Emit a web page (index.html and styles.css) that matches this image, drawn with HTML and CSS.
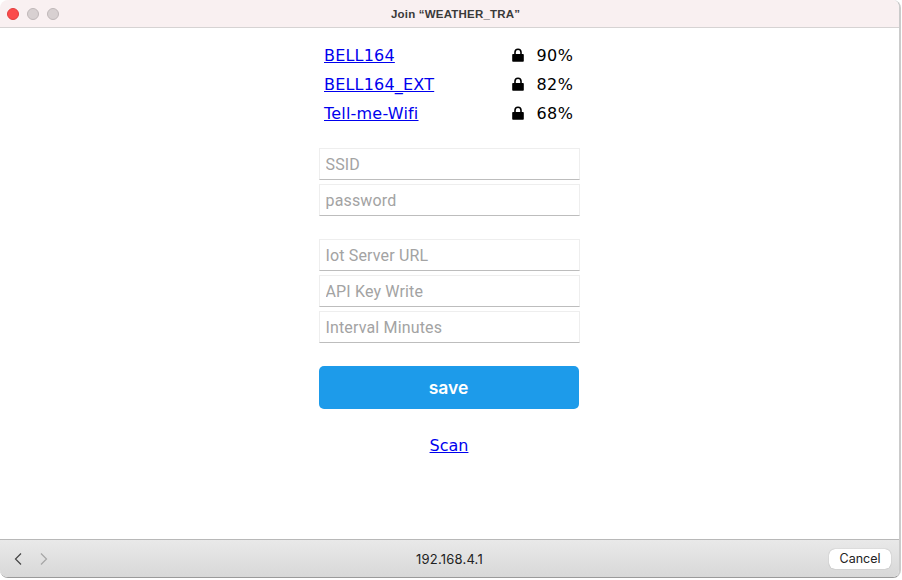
FILE: index.html
```html
<!DOCTYPE html>
<html lang="en">
<head>
<meta charset="utf-8">
<title>Join WEATHER_TRA</title>
<link rel="stylesheet" href="styles.css">
</head>
<body>
<div class="window">
  <header class="titlebar">
    <div class="lights">
      <span class="light light-close"></span>
      <span class="light"></span>
      <span class="light"></span>
    </div>
    <div class="title">Join “WEATHER_TRA”</div>
  </header>
  <main class="content">
    <div class="column">
      <ul class="networks">
        <li class="network"><a href="#">BELL164</a><span class="signal"><svg class="lock" viewBox="0 0 12 14"><path d="M1 6h1.2V4.2a3.800 3.800 0 0 1 7.600 0V6H11a.8.8 0 0 1 .8.8v6.200a.8.8 0 0 1-.8.8H1a.8.8 0 0 1-.8-.8V6.800A.8.8 0 0 1 1 6zM3.800 6h4.400V4.200a2.200 2.200 0 0 0-4.400 0z"/></svg><span class="pct">90%</span></span></li>
        <li class="network"><a href="#">BELL164_EXT</a><span class="signal"><svg class="lock" viewBox="0 0 12 14"><path d="M1 6h1.2V4.2a3.800 3.800 0 0 1 7.600 0V6H11a.8.8 0 0 1 .8.8v6.200a.8.8 0 0 1-.8.8H1a.8.8 0 0 1-.8-.8V6.800A.8.8 0 0 1 1 6zM3.800 6h4.400V4.200a2.200 2.200 0 0 0-4.400 0z"/></svg><span class="pct">82%</span></span></li>
        <li class="network"><a href="#">Tell-me-Wifi</a><span class="signal"><svg class="lock" viewBox="0 0 12 14"><path d="M1 6h1.2V4.2a3.800 3.800 0 0 1 7.600 0V6H11a.8.8 0 0 1 .8.8v6.200a.8.8 0 0 1-.8.8H1a.8.8 0 0 1-.8-.8V6.800A.8.8 0 0 1 1 6zM3.800 6h4.400V4.200a2.200 2.200 0 0 0-4.400 0z"/></svg><span class="pct">68%</span></span></li>
      </ul>
      <form class="form">
        <div class="group">
          <input class="field" placeholder="SSID">
          <input class="field" placeholder="password">
        </div>
        <div class="group">
          <input class="field" placeholder="Iot Server URL">
          <input class="field" placeholder="API Key Write">
          <input class="field" placeholder="Interval Minutes">
        </div>
        <button class="save" type="button">save</button>
      </form>
      <a class="scan" href="#">Scan</a>
    </div>
  </main>
  <footer class="bottombar">
    <div class="nav">
      <svg class="chev" viewBox="0 0 10 14"><path d="M8 1.500 2.500 7 8 12.500" fill="none" stroke="#444" stroke-width="1.200"/></svg>
      <svg class="chev" viewBox="0 0 10 14"><path d="M2 1.500 7.500 7 2 12.500" fill="none" stroke="#a6a6a6" stroke-width="1.200"/></svg>
    </div>
    <div class="address">192.168.4.1</div>
    <button class="cancel" type="button">Cancel</button>
  </footer>
  <span class="edge-handle"></span>
</div>
</body>
</html>
```

FILE: styles.css
```css
* { box-sizing: border-box; }
html, body { margin: 0; height: 100%; }
body {
  width: 902px;
  height: 580px;
  overflow: hidden;
  background: #fff;
  font-family: "DejaVu Sans", sans-serif;
}
.window {
  position: relative;
  width: 901px;
  height: 578px;
  display: flex;
  flex-direction: column;
  border-right: 2px solid #cbcbcb;
  border-bottom: 1px solid #9a9a9a;
  border-radius: 8px;
  overflow: hidden;
}
.edge-handle {
  position: absolute;
  right: -2px;
  top: 323px;
  width: 2px;
  height: 15px;
  background: #b4c0cc;
}
.titlebar {
  height: 28px;
  flex: none;
  display: flex;
  align-items: center;
  background: #f9f0f1;
  border-bottom: 1px solid #d6d3d3;
  padding-left: 7px;
}
.lights { display: flex; gap: 8px; width: 384px; flex: none; }
.light {
  width: 12px;
  height: 12px;
  border-radius: 50%;
  background: #d8d0d1;
  border: 1px solid #bfb7b8;
}
.light-close { background: #fb4b4b; border-color: #e13d3d; }
.title {
  font: bold 11.500px "Liberation Sans", sans-serif;
  color: #3a3a3a;
  letter-spacing: 0.200px;
}
.content {
  flex: 1;
  display: flex;
  justify-content: center;
  background: #fff;
}
.column {
  width: 261px;
  margin-left: -1px;
  display: flex;
  flex-direction: column;
  padding-top: 13px;
}
.networks { list-style: none; margin: 0; padding: 0 6px 0 5.500px; }
.network {
  height: 29px;
  display: flex;
  align-items: center;
  justify-content: space-between;
  font-size: 16px;
  letter-spacing: 0.200px;
}
a { color: #0000ee; }
.signal { display: flex; align-items: center; }
.lock { width: 12px; height: 14px; fill: #000; margin-right: 12px; margin-bottom: 2px; }
.pct { color: #000; letter-spacing: 0.500px; }
.form { display: flex; flex-direction: column; margin-top: 20px; }
.group { display: flex; flex-direction: column; gap: 4px; margin-bottom: 23px; }
.field {
  width: 261px;
  height: 32px;
  padding: 0 6px;
  border: 1px solid #eeeeee;
  border-bottom: 1px solid #bdbdbd;
  background: #fff;
  font: 16px Roboto, sans-serif;
  letter-spacing: 0.150px;
  outline: none;
}
.field::placeholder { color: #a3a3a3; opacity: 1; }
.save {
  width: 260px;
  height: 43px;
  border: 0;
  border-radius: 5px;
  background: #1d9bea;
  color: #fff;
  font: 600 17.500px Inter, sans-serif;
}
.scan { align-self: center; margin-top: 27px; font-size: 16px; }
.bottombar {
  height: 38px;
  flex: none;
  display: grid;
  grid-template-columns: 1fr auto 1fr;
  align-items: center;
  padding: 0 8px;
  background: linear-gradient(#e9e9e9, #d8d8d8);
  border-top: 1px solid #b8b8b8;
}
.nav { display: flex; gap: 16px; margin-left: 5px; }
.chev { width: 10px; height: 14px; }
.address { font: 13px Inter, sans-serif; letter-spacing: 0.200px; color: #222; }
.cancel {
  justify-self: end;
  width: 62px;
  height: 20px;
  padding: 0;
  border: 0;
  border-radius: 6px;
  background: #fff;
  box-shadow: 0 0 1px rgba(0,0,0,.4);
  font: 12.500px Inter, sans-serif;
  color: #222;
}
```
